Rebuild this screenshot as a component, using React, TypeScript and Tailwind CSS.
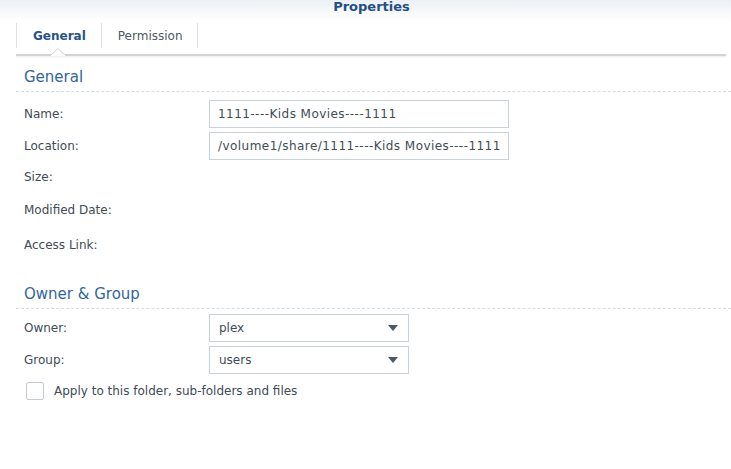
import React from "react";

const font = { fontFamily: '"DejaVu Sans", Verdana, sans-serif' };

function SectionTitle({ children }: { children: React.ReactNode }) {
  return (
    <div className="border-b border-dashed border-[#d3dde8] pl-2 pb-[4px]">
      <div className="text-[15px] leading-[20px] text-[#33659c]">{children}</div>
    </div>
  );
}

function Row({
  label,
  className = "",
  children,
}: {
  label: string;
  className?: string;
  children?: React.ReactNode;
}) {
  return (
    <div className={`flex items-center h-[28px] pl-2 ${className}`}>
      <div className="w-[185px] shrink-0 text-[12px] text-[#414b55]">{label}</div>
      {children}
    </div>
  );
}

function TextBox({ value }: { value: string }) {
  return (
    <div className="w-[300px] h-[28px] border border-[#c9d1da] bg-white flex items-center px-[8px] text-[12px] tracking-[0.45px] text-[#414b55] whitespace-nowrap overflow-hidden">
      {value}
    </div>
  );
}

function Select({ value }: { value: string }) {
  return (
    <div className="w-[200px] h-[28px] border border-[#c9d1da] bg-white flex items-center justify-between pl-[9px] pr-[10px] text-[12px] text-[#414b55]">
      <span>{value}</span>
      <svg width="10" height="6" viewBox="0 0 10 6">
        <path d="M0 0 H10 L5 6 Z" fill="#4f5963" />
      </svg>
    </div>
  );
}

export default function App() {
  return (
    <div className="w-[731px] h-[469px] bg-white overflow-hidden" style={font}>
      {/* Header */}
      <div className="h-[21px] bg-gradient-to-b from-[#ecf0f4] to-white flex justify-center pl-3">
        <div className="text-[13px] font-bold leading-[14px] text-[#234f86]">Properties</div>
      </div>

      {/* Tabs */}
      <div className="pl-4 pr-[5px]">
        <div className="flex h-[25px] mt-[2px]">
          <div className="border-l border-[#dbe2ea] pl-[16px] pr-[15px] flex items-center text-[12px] font-bold text-[#2b5288]">
            General
          </div>
          <div className="border-l border-r border-[#dbe2ea] pl-[16px] pr-[14px] flex items-center text-[12px] text-[#4d5862]">
            Permission
          </div>
        </div>
        <div className="relative mt-[6px] h-[2px] bg-[#d3d3d3] shadow-[0_1px_2px_rgba(0,0,0,0.08)]">
          <svg
            className="absolute left-[35px] -top-[6px]"
            width="14"
            height="8"
            viewBox="0 0 14 8"
          >
            <path d="M0 7 L7 0.5 L14 7 L14 8 L0 8 Z" fill="white" />
            <path d="M0 7 L7 0.5 L14 7" fill="none" stroke="#d3d3d3" strokeWidth="1" />
          </svg>
        </div>
      </div>

      {/* Content */}
      <div className="pl-4 pr-0 pt-[11px]">
        <SectionTitle>General</SectionTitle>
        <div className="pt-[8px]">
          <Row label="Name:">
            <TextBox value="1111----Kids Movies----1111" />
          </Row>
          <Row label="Location:" className="mt-[4px]">
            <TextBox value="/volume1/share/1111----Kids Movies----1111" />
          </Row>
          <Row label="Size:" className="mt-[3px]" />
          <Row label="Modified Date:" className="mt-[5px]" />
          <Row label="Access Link:" className="mt-[7px]" />
        </div>

        <div className="mt-[25px]">
          <SectionTitle>Owner &amp; Group</SectionTitle>
        </div>
        <div className="pt-[5px]">
          <Row label="Owner:">
            <Select value="plex" />
          </Row>
          <Row label="Group:" className="mt-[4px]">
            <Select value="users" />
          </Row>
          <div className="flex items-center mt-[8px] pl-[10px]">
            <div className="w-[18px] h-[18px] border border-[#c5ccd5] rounded-[2px] bg-white" />
            <span className="ml-[10px] text-[12px] text-[#414b55]">
              Apply to this folder, sub-folders and files
            </span>
          </div>
        </div>
      </div>
    </div>
  );
}
